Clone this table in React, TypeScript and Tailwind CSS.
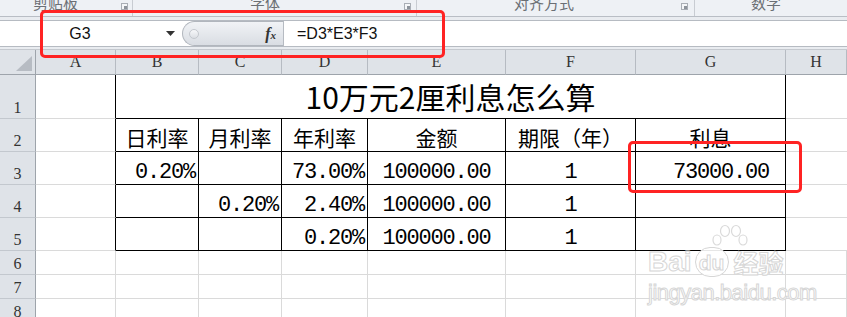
import React from 'react';

const colLetters = ['A', 'B', 'C', 'D', 'E', 'F', 'G', 'H'];

const num = "font-['Liberation_Mono','Noto_Sans_CJK_SC',monospace] text-[22px] tracking-[-1.2px] leading-none";
const cjk = "font-['Noto_Sans_CJK_SC',sans-serif] text-[21px] leading-none pb-[3px]";

type Cell = { text?: string; align?: string; kind?: 'num' | 'cjk' };

const bodyRows: { n: number; h: string; cells: Cell[] }[] = [
    {
        n: 2,
        h: 'h-[33px]',
        cells: [
            { text: '日利率', align: 'justify-center', kind: 'cjk' },
            { text: '月利率', align: 'justify-center', kind: 'cjk' },
            { text: '年利率', align: 'justify-center', kind: 'cjk' },
            { text: '金额', align: 'justify-center', kind: 'cjk' },
            { text: '期限（年）', align: 'justify-center', kind: 'cjk' },
            { text: '利息', align: 'justify-center', kind: 'cjk' },
        ],
    },
    {
        n: 3,
        h: 'h-[33px]',
        cells: [
            { text: '0.20%', align: 'justify-end pr-[3px]', kind: 'num' },
            {},
            { text: '73.00%', align: 'justify-end pr-[3px]', kind: 'num' },
            { text: '100000.00', align: 'justify-center', kind: 'num' },
            { text: '1', align: 'justify-center', kind: 'num' },
            { text: '73000.00', align: 'justify-end pr-[16px]', kind: 'num' },
        ],
    },
    {
        n: 4,
        h: 'h-[33px]',
        cells: [
            {},
            { text: '0.20%', align: 'justify-end pr-[3px]', kind: 'num' },
            { text: '2.40%', align: 'justify-end pr-[3px]', kind: 'num' },
            { text: '100000.00', align: 'justify-center', kind: 'num' },
            { text: '1', align: 'justify-center', kind: 'num' },
            {},
        ],
    },
    {
        n: 5,
        h: 'h-[33px]',
        cells: [
            {},
            {},
            { text: '0.20%', align: 'justify-end pr-[3px]', kind: 'num' },
            { text: '100000.00', align: 'justify-center', kind: 'num' },
            { text: '1', align: 'justify-center', kind: 'num' },
            {},
        ],
    },
];

const RowHead = ({ n, h }: { n: number; h: string }) => (
    <div className={`${h} flex items-end justify-center border-r border-b border-r-[#9ea4ab] border-b-[#c3c8ce] bg-[#dfe3e8] pb-[2px] font-['Liberation_Serif',serif] text-[16px] leading-none text-[#333]`}>
        {n}
    </div>
);

const Launcher = () => (
    <div className="relative mt-[3px] size-[7px] border border-[#a9aeb5] bg-[#f4f6f8]">
        <div className="absolute right-0 bottom-0 size-[3px] bg-[#8d939b]" />
    </div>
);

export default function App() {
    return (
        <div className="relative h-[317px] w-[847px] overflow-hidden bg-white">
            {/* ribbon group labels */}
            <div className="flex h-[17px] overflow-hidden border-b border-[#b9bec5] bg-[#eef1f5] font-['Noto_Sans_CJK_SC',sans-serif] text-[15px] leading-none text-[#6b6f74]">
                <div className="flex w-[133px] justify-between border-r border-[#c8ccd2] pr-[4px]">
                    <span className="mt-[-5px] ml-[33px]">剪贴板</span>
                    <Launcher />
                </div>
                <div className="flex w-[284px] justify-between border-r border-[#c8ccd2] pr-[5px]">
                    <span className="mt-[-5px] ml-[117px]">字体</span>
                    <Launcher />
                </div>
                <div className="flex w-[278px] justify-between border-r border-[#c8ccd2] pr-[6px]">
                    <span className="mt-[-5px] ml-[97px]">对齐方式</span>
                    <Launcher />
                </div>
                <div className="flex flex-1">
                    <span className="mt-[-5px] ml-[56px]">数字</span>
                </div>
            </div>

            {/* formula bar */}
            <div className="h-[3px] bg-[#e9ecf0]" />
            <div className="flex h-[27px] border-y border-[#b6bbc2] bg-white">
                <div className="flex w-[182px] items-center">
                    <span className="w-[160px] text-center font-['Liberation_Sans',sans-serif] text-[16px] text-[#111]">G3</span>
                    <svg width="9" height="5" viewBox="0 0 9 5" className="ml-[6px]">
                        <path d="M0 0h9L4.5 5z" fill="#333" />
                    </svg>
                </div>
                <div className="flex w-[101px] items-center justify-between rounded-l-full border-y border-l border-[#b1b6bd] bg-gradient-to-b from-[#f1f3f6] to-[#d9dde3] pl-[6px] pr-[7px]">
                    <div className="size-[10px] rounded-full border border-[#c4c8ce] bg-gradient-to-b from-[#f7f8fa] to-[#dcdfe4]" />
                    <span className="font-['Liberation_Serif',serif] text-[16px] font-bold italic leading-none text-[#333]">
                        f<span className="text-[11px]">x</span>
                    </span>
                </div>
                <div className="flex flex-1 items-center border-l border-[#b6bbc2] pl-[13px] font-['Liberation_Sans',sans-serif] text-[16px] text-[#111]">
                    =D3*E3*F3
                </div>
            </div>
            <div className="h-[3px] border-b border-[#c5c9cf] bg-[#e9ecf0]" />

            {/* sheet */}
            <div className="grid grid-cols-[36px_80px_83px_83px_86px_138px_130px_150px_61px]">
                {/* header row */}
                <div className="relative h-[25px] border-r border-b border-r-[#9ea4ab] border-b-[#9ea4ab] bg-[#dfe3e8]">
                    <svg width="16" height="15" className="absolute right-[3px] bottom-[3px]">
                        <path d="M16 0V15H0z" fill="#b7bcc3" />
                    </svg>
                </div>
                {colLetters.map((c) => (
                    <div
                        key={c}
                        className="flex h-[25px] items-center justify-center border-r border-b border-r-[#b6bbc2] border-b-[#9ea4ab] bg-[#dfe3e8] font-['Liberation_Serif',serif] text-[16px] text-[#333]"
                    >
                        {c}
                    </div>
                ))}

                {/* row 1: merged title */}
                <RowHead n={1} h="h-[44px]" />
                <div className="h-[44px] border-r border-b border-r-black border-b-[#dadada]" />
                <div className="col-span-6 flex h-[44px] items-end justify-center border-r border-b border-black pb-[7px] font-['Noto_Sans_CJK_SC',sans-serif] text-[30px] leading-none text-black">
                    10万元2厘利息怎么算
                </div>
                <div className="h-[44px] border-b border-[#dadada]" />

                {bodyRows.map((row) => (
                    <React.Fragment key={row.n}>
                        <RowHead n={row.n} h={row.h} />
                        <div className={`${row.h} border-r border-b border-r-black border-b-[#dadada]`} />
                        {row.cells.map((cell, i) => (
                            <div
                                key={i}
                                className={`${row.h} flex items-end overflow-visible whitespace-nowrap border-r border-b border-black text-black ${cell.align ?? ''}`}
                            >
                                {cell.text && <span className={cell.kind === 'num' ? num : cjk}>{cell.text}</span>}
                            </div>
                        ))}
                        <div className={`${row.h} border-b border-[#dadada]`} />
                    </React.Fragment>
                ))}

                {[6, 7, 8].map((n) => (
                    <React.Fragment key={n}>
                        <RowHead n={n} h="h-[24px]" />
                        {colLetters.map((c) => (
                            <div key={c} className="h-[24px] border-r border-b border-[#dadada]" />
                        ))}
                    </React.Fragment>
                ))}
            </div>

            {/* baidu watermark */}
            <div className="absolute top-[224px] left-[648px] flex flex-col items-start text-white/90">
                <svg width="44" height="28" viewBox="0 0 44 28" className="ml-[60px]" fill="white" stroke="#dadada" strokeWidth="1.2">
                    <ellipse cx="9" cy="16" rx="4" ry="5" />
                    <ellipse cx="17" cy="7" rx="4.5" ry="5.5" />
                    <ellipse cx="28" cy="7" rx="4.5" ry="5.5" />
                    <ellipse cx="35" cy="16" rx="4" ry="5" />
                </svg>
                <div className="-mt-[5px] flex items-center font-['Liberation_Sans',sans-serif] text-[28px] font-bold leading-none [-webkit-text-stroke:1px_#d6d6d6]">
                    <span>Bai</span>
                    <span className="ml-[3px] flex h-[30px] w-[34px] items-center justify-center rounded-full border border-[#d6d6d6] bg-white/90 text-[21px]">
                        du
                    </span>
                    <span className="ml-[5px] font-['Noto_Sans_CJK_SC',sans-serif] text-[25px]">经验</span>
                </div>
                <div className="mt-[5px] font-['Liberation_Sans',sans-serif] text-[22px] leading-none tracking-[-0.5px] [-webkit-text-stroke:1px_#d6d6d6]">
                    jingyan.baidu.com
                </div>
            </div>

            {/* red highlight boxes */}
            <div className="absolute top-[10px] left-[40px] h-[48px] w-[405px] rounded-[5px] border-[3px] border-[#ff2323]" />
            <div className="absolute top-[141px] left-[628px] h-[52px] w-[174px] rounded-[5px] border-[3px] border-[#ff2323]" />
        </div>
    );
}
